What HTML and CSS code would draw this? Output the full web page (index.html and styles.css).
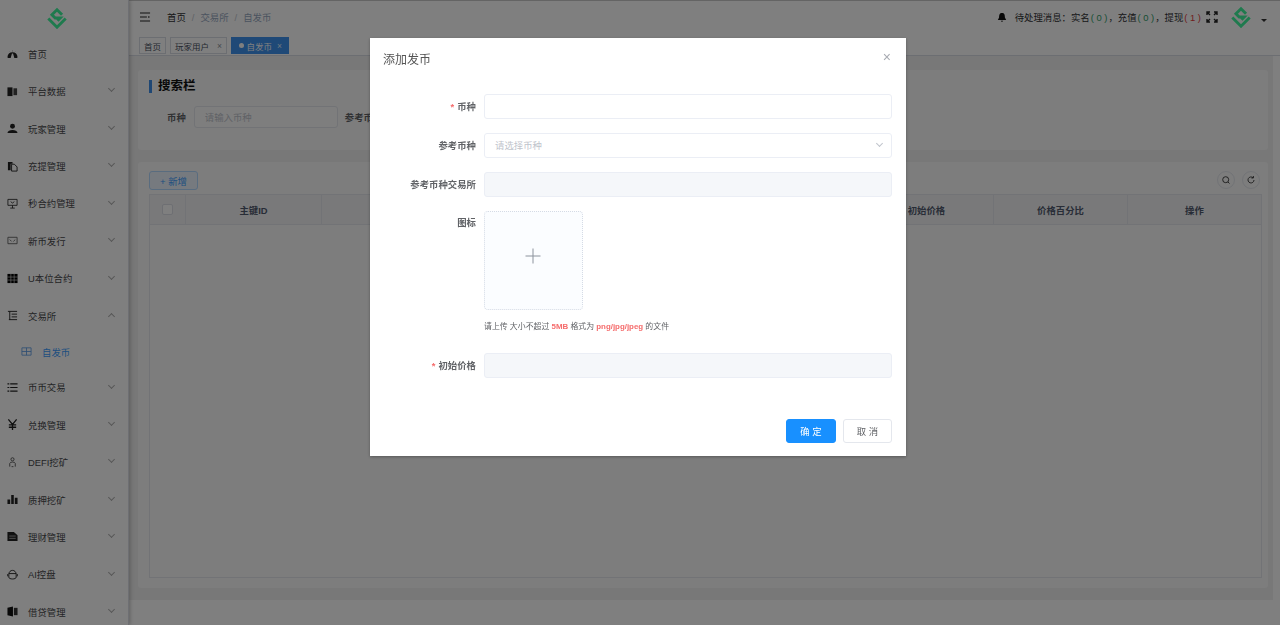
FILE: index.html
```html
<!DOCTYPE html>
<html lang="zh">
<head>
  <meta charset="UTF-8">
  <meta name="viewport" content="width=device-width, initial-scale=1.0">
  <title>自发币</title>
  <link rel="stylesheet" href="styles.css">
</head>
<body>

  <aside class="sidebar">
    <div class="side-logo">
      <svg class="logo-mark" viewBox="0 0 24 24"><path d="M2.5 12.5 L12 22 L21.5 12.5 M17.5 8.5 L12 3 L6.5 8.5 L10 12 H15.5 L12.5 15" fill="none" stroke="#3ff59c" stroke-width="3.2"/></svg>
    </div>
    <ul class="menu">
      <li class="menu-item">
        <svg class="ico" viewBox="0 0 12 12"><path d="M.5 10 A5.5 5.5 0 0 1 11.5 10 L11 11 L8 11 L6.6 6 L5.4 6 L4 11 L1 11 Z" fill="#222"/><path d="M3 4 L4 5 M9 4 L8 5 M6 2.5 V4" stroke="#999" stroke-width=".7"/></svg>
        <span>首页</span>
      </li>
      <li class="menu-item">
        <svg class="ico" viewBox="0 0 12 12"><path d="M.5 1.5 L6 1.5 L6 11 L.5 11 Z" fill="#222"/><path d="M7 2.5 H11 V10 H7 Z" fill="#444"/></svg>
        <span>平台数据</span><i class="chev"></i>
      </li>
      <li class="menu-item">
        <svg class="ico" viewBox="0 0 12 12"><circle cx="6" cy="3.5" r="2.7" fill="#222"/><path d="M.5 11 C.5 6.5 11.5 6.5 11.5 11 Z" fill="#222"/></svg>
        <span>玩家管理</span><i class="chev"></i>
      </li>
      <li class="menu-item">
        <svg class="ico" viewBox="0 0 12 12"><path d="M1 1 L6 1 L6 3 L4 3 L4 10 L1 10 Z" fill="#222"/><path d="M5 3.5 L8 3.5 L11 6.5 L11 11 L5 11 Z" fill="none" stroke="#222"/></svg>
        <span>充提管理</span><i class="chev"></i>
      </li>
      <li class="menu-item">
        <svg class="ico" viewBox="0 0 12 12"><path d="M1 1.5 H11 V8 H1 Z M6 8 V11 M3.5 11 H8.5 M4 4 L6 5.5 L8 4" fill="none" stroke="#222" stroke-width="0.9"/></svg>
        <span>秒合约管理</span><i class="chev"></i>
      </li>
      <li class="menu-item">
        <svg class="ico" viewBox="0 0 12 12"><path d="M1 2.5 H11 V9.5 H1 Z M3 5 L5 7 M9 5 L7 7" fill="none" stroke="#555" stroke-width="0.9"/></svg>
        <span>新币发行</span><i class="chev"></i>
      </li>
      <li class="menu-item">
        <svg class="ico" viewBox="0 0 12 12"><path d="M.5 1 H11.5 V11 H.5 Z" fill="#000"/><path d="M4.2 1 V11 M7.8 1 V11 M.5 4.4 H11.5 M.5 7.7 H11.5" stroke="#fff" stroke-width="0.6"/></svg>
        <span>U本位合约</span><i class="chev"></i>
      </li>
      <li class="menu-item">
        <svg class="ico" viewBox="0 0 12 12"><path d="M1 1.5 H11 M5 4.5 H11 M5 7.5 H11 M2 10.5 H11 M3 1.5 V10.5" fill="none" stroke="#222"/></svg>
        <span>交易所</span><i class="chev chev-up"></i>
      </li>
      <li class="menu-item menu-child">
        <svg class="ico" viewBox="0 0 12 12"><path d="M1 2 H11 V10 H1 Z M1 6 H11 M6 2 V10" fill="none" stroke="#5b9be6" stroke-width="0.9"/></svg>
        <span>自发币</span>
      </li>
      <li class="menu-item">
        <svg class="ico" viewBox="0 0 12 12"><path d="M3.5 2 H11.5 M3.5 6 H11.5 M3.5 10 H11.5 M.5 2 H2.5 M.5 6 H2.5 M.5 10 H2.5" fill="none" stroke="#222" stroke-width="1.3"/></svg>
        <span>币币交易</span><i class="chev"></i>
      </li>
      <li class="menu-item">
        <svg class="ico" viewBox="0 0 12 12"><path d="M1.5 .5 L6 6 L10.5 .5 M6 6 V12 M2 6.5 H10 M2 9 H10" fill="none" stroke="#222" stroke-width="1.4"/></svg>
        <span>兑换管理</span><i class="chev"></i>
      </li>
      <li class="menu-item">
        <svg class="ico" viewBox="0 0 12 12"><circle cx="6" cy="2.5" r="1.7" fill="none" stroke="#555"/><path d="M3 10.5 V7 C3 5 9 5 9 7 V10.5 M5 10.5 H7" fill="none" stroke="#555"/></svg>
        <span>DEFI挖矿</span><i class="chev"></i>
      </li>
      <li class="menu-item">
        <svg class="ico" viewBox="0 0 12 12"><path d="M.5 6 H3.5 V11 H.5 Z M4.6 1 H7.4 V11 H4.6 Z M8.5 4 H11.5 V11 H8.5 Z" fill="#222"/></svg>
        <span>质押挖矿</span><i class="chev"></i>
      </li>
      <li class="menu-item">
        <svg class="ico" viewBox="0 0 12 12"><path d="M.5 1 H7.5 L11.5 4.5 V11 H.5 Z" fill="#222"/><path d="M2.5 5.5 H9.5 M2.5 8 H9.5" stroke="#bbb" stroke-width="0.9"/></svg>
        <span>理财管理</span><i class="chev"></i>
      </li>
      <li class="menu-item">
        <svg class="ico" viewBox="0 0 12 12"><path d="M2 6 C2 0 10 0 10 6 V9 C10 11.5 2 11.5 2 9 Z M2 5 H10" fill="none" stroke="#222"/><path d="M.8 5.5 V8 M11.2 5.5 V8" stroke="#222"/></svg>
        <span>AI控盘</span><i class="chev"></i>
      </li>
      <li class="menu-item">
        <svg class="ico" viewBox="0 0 12 12"><path d="M.5 2 L6.5 .5 V11.5 L.5 10 Z" fill="#111"/><path d="M7.5 2 H11.5 V10 H7.5 Z" fill="#333"/></svg>
        <span>借贷管理</span><i class="chev"></i>
      </li>
    </ul>
  </aside>

  <div class="main">
    <header class="topbar">
      <svg class="fold" viewBox="0 0 12 10"><path d="M0 .7 H11 M0 5 H7.5 M0 9.3 H11" stroke="#222" stroke-width="1.2"/><path d="M9 4 L11 5 L9 6 Z" fill="#222"/></svg>
      <div class="crumbs">
        <b>首页</b><em>/</em><span>交易所</span><em>/</em><span>自发币</span>
      </div>
      <div class="top-right">
        <svg class="bell" viewBox="0 0 12 12"><path d="M6 .5 C9 .5 9.5 3 9.5 6 L11 9 H1 L2.5 6 C2.5 3 3 .5 6 .5 Z M4.5 10 H7.5 L6 11.5 Z" fill="#111"/></svg>
        <span class="notice">待处理消息：实名<i class="ok">( 0 )</i>，充值<i class="ok">( 0 )</i>，提现<i class="bad">( 1 )</i></span>
        <svg class="expand" viewBox="0 0 12 12"><path d="M1 4 V1 H4 M8 1 H11 V4 M11 8 V11 H8 M4 11 H1 V8 M1 1 L4 4 M11 1 L8 4 M11 11 L8 8 M1 11 L4 8" fill="none" stroke="#222" stroke-width="1.4"/></svg>
        <svg class="logo-mark" viewBox="0 0 24 24"><path d="M2.5 12.5 L12 22 L21.5 12.5 M17.5 8.5 L12 3 L6.5 8.5 L10 12 H15.5 L12.5 15" fill="none" stroke="#3ff59c" stroke-width="3.2"/></svg>
        <i class="caret"></i>
      </div>
    </header>

    <nav class="tabs">
      <a class="tab">首页</a>
      <a class="tab">玩家用户<i>×</i></a>
      <a class="tab tab-on"><u></u>自发币<i>×</i></a>
    </nav>

    <section class="content">
      <div class="card search-card">
        <h3 class="card-title">搜索栏</h3>
        <div class="search-row">
          <label>币种</label>
          <input class="search-input" type="text" placeholder="请输入币种">
          <label class="label-next">参考币种</label>
        </div>
      </div>

      <div class="card table-card">
        <div class="toolbar">
          <button class="btn-add">+ 新增</button>
          <div class="tools">
            <span class="round"><svg viewBox="0 0 10 10"><circle cx="4.7" cy="4.7" r="3" fill="none" stroke="#333" stroke-width=".9"/><path d="M7 7 L8.5 8.5" stroke="#333" stroke-width=".9"/></svg></span>
            <span class="round"><svg viewBox="0 0 10 10"><path d="M8 5 A3 3 0 1 1 7 2.7 M7.4 1 V3 H5.4" fill="none" stroke="#333" stroke-width=".9"/></svg></span>
          </div>
        </div>
        <div class="grid-box">
          <div class="grid-head">
            <div class="cell cell-check"><i class="check"></i></div>
            <div class="cell cell-id">主键ID</div>
            <div class="cell cell-rest"></div>
            <div class="cell cell-col">初始价格</div>
            <div class="cell cell-col">价格百分比</div>
            <div class="cell cell-col">操作</div>
          </div>
        </div>
      </div>
    </section>
  </div>

  <div class="mask">
    <div class="dialog">
      <div class="dialog-head">
        <span>添加发币</span>
        <i class="close">×</i>
      </div>
      <form class="dialog-body">
        <div class="row">
          <label><em>*</em>币种</label>
          <input class="field" type="text">
        </div>
        <div class="row">
          <label>参考币种</label>
          <div class="field select">请选择币种<i class="chev"></i></div>
        </div>
        <div class="row">
          <label>参考币种交易所</label>
          <input class="field off" type="text" disabled>
        </div>
        <div class="row row-upload">
          <label>图标</label>
          <div class="upload">
            <svg viewBox="0 0 16 16"><path d="M8 .5 V15.5 M.5 8 H15.5" stroke="#8c939d" stroke-width="1"/></svg>
          </div>
        </div>
        <p class="hint">请上传 大小不超过 <b>5MB</b> 格式为 <b>png/jpg/jpeg</b> 的文件</p>
        <div class="row">
          <label><em>*</em>初始价格</label>
          <input class="field off" type="text" disabled>
        </div>
      </form>
      <div class="dialog-foot">
        <button class="btn btn-ok">确 定</button>
        <button class="btn">取 消</button>
      </div>
    </div>
  </div>

</body>
</html>
```

FILE: styles.css
```css
* { box-sizing: border-box; margin: 0; padding: 0; }
html, body { height: 100%; overflow: hidden; }
body {
  font-family: "Liberation Sans", "Noto Sans CJK SC", sans-serif;
  font-size: 9.4px;
  color: #303133;
  background: #fff;
  display: flex;
}
i, em { font-style: normal; }
ul { list-style: none; }

.sidebar {
  width: 129px;
  flex: none;
  background: #fff;
  border-right: 1px solid #dcdfe6;
  box-shadow: 1px 0 4px rgba(0,0,0,0.25);
  position: relative;
  z-index: 1;
}
.side-logo { height: 35px; display: flex; align-items: center; justify-content: center; padding-right: 15px; }
.logo-mark { width: 22px; height: 22px; display: block; }
.menu-item {
  height: 37.45px;
  display: flex;
  align-items: center;
  padding-left: 7px;
  color: #48494c;
  position: relative;
}
.menu-item .ico { width: 11px; height: 11px; margin-right: 10px; flex: none; }
.menu-child { padding-left: 21px; color: #409eff; height: 34px; }
.chev {
  width: 5px;
  height: 5px;
  border-right: 1px solid #b0b0b0;
  border-bottom: 1px solid #b0b0b0;
  transform: rotate(45deg);
  position: absolute;
  right: 14px;
  top: 14px;
}
.chev-up { transform: rotate(225deg); top: 17px; }

.main { flex: 1; min-width: 0; display: flex; flex-direction: column; }
.topbar {
  height: 36px;
  flex: none;
  background: #fff;
  border-top: 1px solid #c8c8c8;
  display: flex;
  align-items: center;
  padding: 0 13px 3px 11px;
}
.fold { width: 11px; height: 10px; margin-right: 16px; flex: none; }
.crumbs { display: flex; align-items: center; color: #97a8be; }
.crumbs b { font-weight: 400; color: #303133; }
.crumbs em { margin: 0 6px; color: #c0c4cc; }
.top-right { margin-left: auto; display: flex; align-items: center; }
.bell { width: 10px; height: 11px; margin-right: 8px; }
.notice { color: #303133; }
.ok { color: #2f9e6a; margin: 0 1px; }
.bad { color: #e23c3c; margin: 0 1px; }
.expand { width: 12px; height: 12px; margin: 0 12px 0 4px; }
.caret {
  width: 0;
  height: 0;
  border: 3px solid transparent;
  border-top: 3px solid #333;
  margin: 9px 0 0 9px;
}

.tabs {
  height: 20px;
  flex: none;
  background: #fff;
  border-bottom: 1px solid #d8dce5;
  display: flex;
  gap: 4px;
  padding: 1px 0 0 10px;
}
.tab {
  height: 17px;
  padding: 0 4px;
  border: 1px solid #d8dce5;
  display: flex;
  align-items: center;
  font-size: 8.5px;
  color: #495060;
}
.tab i { margin-left: 8px; color: #8a8f99; }
.tab-on { background: #3f93ee; border-color: #3f93ee; color: #fff; padding: 0 6.5px; }
.tab-on i { margin-left: 5px; color: #dfeeff; }
.tab-on u { width: 5px; height: 5px; border-radius: 50%; background: #fff; margin-right: 3px; }

.content {
  flex: 1;
  min-height: 0;
  background: #f0f0f0;
  padding: 14px 5px 0 9px;
  margin: 0 7px 25px 0;
  display: flex;
  flex-direction: column;
  gap: 12px;
}
.card { background: #fafafa; border-radius: 3px; }
.search-card { height: 80px; padding: 10px 11px; }
.card-title {
  font-size: 12.5px;
  line-height: 13px;
  font-weight: 700;
  color: #111;
  border-left: 3px solid #3f8fe8;
  padding-left: 6px;
}
.search-row { display: flex; align-items: center; margin-top: 13px; padding-left: 18px; }
.search-row label { font-weight: 700; color: #606266; margin-right: 8px; }
.search-row .label-next { margin-left: 7px; }
.search-input {
  width: 144px;
  height: 22px;
  border: 1px solid #e4e7ed;
  border-radius: 3px;
  padding: 0 10px;
  font: inherit;
  outline: none;
  background: #fcfcfc;
}
.search-input::placeholder { color: #c0c4cc; }
.table-card { flex: 1; margin-bottom: 12px; padding: 9px 6px 10px 11px; display: flex; flex-direction: column; }
.toolbar { height: 23px; flex: none; display: flex; align-items: flex-start; justify-content: space-between; }
.btn-add {
  width: 49px;
  height: 19px;
  border: 1px solid #b3d8ff;
  border-radius: 3px;
  background: #ecf5ff;
  color: #409eff;
  font: inherit;
}
.tools { display: flex; gap: 7px; margin-right: 2px; }
.round {
  width: 18px;
  height: 18px;
  border: 1px solid #e4e7ed;
  border-radius: 50%;
  display: flex;
  align-items: center;
  justify-content: center;
}
.round svg { width: 10px; height: 10px; }
.grid-box { flex: 1; border: 1px solid #e4e7ed; }
.grid-head { height: 30px; display: flex; background: #f2f3f5; border-bottom: 1px solid #e4e7ed; }
.cell {
  display: flex;
  align-items: center;
  justify-content: center;
  border-right: 1px solid #e4e7ed;
  font-weight: 700;
  color: #515a6e;
}
.cell:last-child { border-right: 0; }
.cell-check { width: 36px; }
.check { width: 11px; height: 11px; border: 1px solid #dcdfe6; background: #fff; border-radius: 2px; }
.cell-id { width: 136px; }
.cell-rest { width: 538px; }
.cell-col { flex: 1; }

.mask {
  position: fixed;
  inset: 0;
  z-index: 10;
  background: rgba(0,0,0,0.5);
}
.dialog {
  width: 536px;
  height: 418px;
  margin: 38px 0 0 370px;
  background: #fff;
  display: flex;
  flex-direction: column;
  box-shadow: 0 1px 3px rgba(0,0,0,0.3);
}
.dialog-head {
  height: 41px;
  padding: 0 15px 0 13px;
  display: flex;
  align-items: center;
  justify-content: space-between;
  font-size: 12px;
  color: #555;
}
.close { font-size: 14px; color: #a8abb2; font-weight: 400; margin-bottom: 3px; }
.dialog-body { flex: 1; padding: 15px 14px 0 0; }
.row { display: flex; align-items: center; margin-bottom: 14.5px; }
.row label {
  width: 106px;
  margin-right: 8px;
  padding-bottom: 1px;
  text-align: right;
  font-weight: 700;
  color: #606266;
  flex: none;
}
.row label em { color: #f56c6c; margin-right: 3px; }
.field {
  flex: 1;
  height: 24.5px;
  border: 1px solid #ebeef5;
  border-radius: 3px;
  padding: 0 10px;
  font: inherit;
  outline: none;
  background: #fff;
}
.select { display: flex; align-items: center; color: #c0c4cc; position: relative; }
.select .chev { right: 9px; top: 7px; border-color: #c0c4cc; }
.off { background: #f5f7fa; }
.row-upload { align-items: flex-start; margin-bottom: 11px; }
.row-upload label { margin-top: 4px; }
.upload {
  width: 99px;
  height: 99px;
  border: 1px dotted #d5dbe5;
  border-radius: 4px;
  background: #fbfdff;
  padding: 0 1px 9px 0;
  display: flex;
  align-items: center;
  justify-content: center;
}
.upload svg { width: 16px; height: 16px; }
.hint { margin: 0 0 20px 114px; font-size: 7.9px; line-height: 12px; color: #606266; }
.hint b { font-weight: 700; color: #f56c6c; }
.dialog-foot { display: flex; justify-content: flex-end; gap: 7px; padding: 0 14px 13px 0; }
.btn {
  width: 49px;
  height: 24px;
  border: 1px solid #e4e7ed;
  border-radius: 3px;
  background: #fff;
  color: #606266;
  font: inherit;
}
.btn-ok { width: 50px; background: #1890ff; border-color: #1890ff; color: #fff; }
```
